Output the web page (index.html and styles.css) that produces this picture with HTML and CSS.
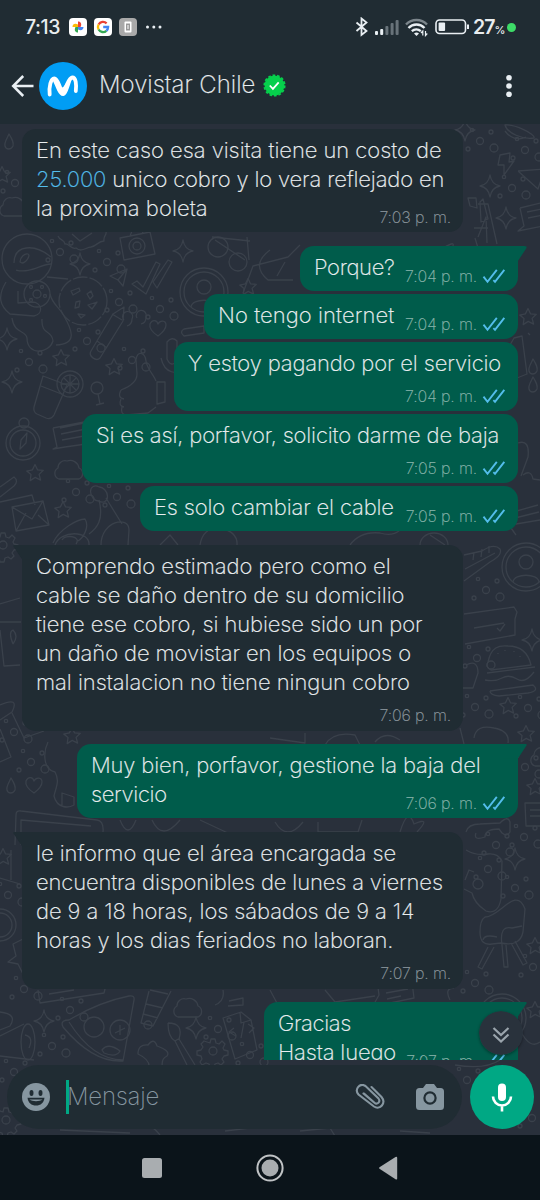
FILE: index.html
```html
<!DOCTYPE html>
<html lang="es">
<head>
<meta charset="utf-8">
<title>Movistar Chile</title>
<link rel="stylesheet" href="styles.css">
</head>
<body>
<svg class="defs" aria-hidden="true">
  <defs>
    <symbol id="ticks" viewBox="0 0 24 16"><path d="M1.500 8.600l4 5.200L14.800 1.800M11.400 12.200l1.600 1.600L22.300 1.800" fill="none" stroke="#53bdeb" stroke-width="1.900"/></symbol>
    <path id="star" d="M0-8.500l2.500 5.300 5.800.5-4.200 4.100 1.500 5.800-5.400-2.800-5 3.200.8-6L-8.300-1.900l5.700-1.200z"/>
    <path id="spark" d="M0-11Q1.500-1.500 10 0 1.500 1.500 0 11-1.500 1.500-10 0-1.500-1.500 0-11z"/>
    <path id="cloud" d="M-10 9a6 6 0 0 1-1-11 7 7 0 0 1 9-7 9 9 0 0 1 12 7 6 6 0 0 1 0 11z"/>
    <path id="heart" d="M0 8C-6 4-9 0-8-4c2-5 7-4 8 0 2-4 8-4 8 1C8 1 4 5 0 8z"/>
    <path id="drop" d="M0-8C3-3 5 0 4 4 2 8-3 8-4 4-5 0-2-3 0-8z"/>
    <g id="dots"><circle r="3.500"/><circle cx="-12" cy="8" r="2"/><circle cx="11" cy="-9" r="2"/><circle cx="14" cy="7" r="4"/><circle cx="-8" cy="-11" r="1.700"/></g>
    <g id="gear"><circle r="4"/><path d="M-3-8l1-4h4l1 4 3 1 3-3 3 3-2 4 1 2 4 1v4l-4 1-2 3 2 3-3 3-3-2-3 1-1 4h-4l-1-4-3-1-4 2-2-3 2-3-1-3-4-1v-4l4-1 2-3-2-3 3-3z"/></g>
    <g id="avatar"><circle r="24"/><circle r="20"/><circle cy="-5" r="7"/><path d="M-13 15c1-9 25-9 26 0"/></g>
    <g id="bubbleNote"><path d="M-18-12l34-6 3 24-24 5-10 7 1-7-7 1 5-9z"/><path d="M-10-5l22-4M-9 1l22-4M-8 7l14-3"/></g>
  </defs>
</svg>

<div class="phone">
  <header class="top">
    <div class="status">
      <span class="clock">7:13</span>
      <svg class="app" viewBox="0 0 18 18"><rect width="18" height="18" rx="4" fill="#fff"/><path d="M9 9V3.500C12 3.500 13 6 11.500 9z" fill="#ea4335"/><path d="M9 9h5.500c0 3-2.500 4-5.500 2.500z" fill="#4285f4"/><path d="M9 9v5.500C6 14.500 5 12 6.500 9z" fill="#34a853"/><path d="M9 9H3.500C3.500 6 6 5 9 6.500z" fill="#fbbc04"/></svg>
      <svg class="app" viewBox="0 0 18 18"><rect width="18" height="18" rx="4" fill="#fff"/><g fill="none" stroke-width="2.300"><path d="M12.600 5.300A5.100 5.100 0 0 0 4.600 6.500" stroke="#ea4335"/><path d="M4.600 6.500a5.100 5.100 0 0 0 0 5" stroke="#fbbc04"/><path d="M4.600 11.500a5.100 5.100 0 0 0 7.800 1.300" stroke="#34a853"/><path d="M12.400 12.800A5.100 5.100 0 0 0 14.100 9H9.200" stroke="#4285f4"/></g></svg>
      <svg class="app" viewBox="0 0 18 18"><rect width="18" height="18" rx="4" fill="#a9a9a9"/><rect x="5.500" y="3.500" width="7" height="11" rx="1" fill="#fff"/><rect x="7" y="5.500" width="4" height="7" fill="#999"/><path d="M9 7v4" stroke="#fff"/></svg>
      <svg class="more" viewBox="0 0 18 4" fill="#e9eff3"><circle cx="2.500" cy="2" r="1.500"/><circle cx="8.800" cy="2" r="1.500"/><circle cx="15" cy="2" r="1.500"/></svg>
      <svg class="sys" viewBox="0 0 117 20" fill="none" stroke="#e9eff3">
        <path d="M1.500 5.500l10 8.500-5 4V1.500l5 4-10 8.500" stroke-width="1.800"/>
        <g stroke="none" fill="#e9eff3"><rect x="20" y="14" width="3" height="4" rx="1"/><rect x="25.200" y="12" width="3" height="6" rx="1"/></g>
        <g stroke="none" fill="#68737a"><rect x="30.400" y="9" width="3" height="9" rx="1"/><rect x="35.600" y="6" width="3" height="12" rx="1"/><rect x="40.600" y="3" width="3" height="15" rx="1"/></g>
        <path d="M51 7.500a14.500 14.500 0 0 1 21 0" stroke="#7b858b" stroke-width="2.400"/>
        <path d="M53.500 11a11 11 0 0 1 16 0M56.800 14.200a7 7 0 0 1 9 0" stroke-width="2.400"/>
        <path d="M59 16.500l2.500 2.500 2.500-2.500a4 4 0 0 0-5 0z" fill="#e9eff3" stroke="none"/><path d="M67.800 18.500v-4.500l-1.800 2M70.500 14v4.500l1.800-2" stroke-width="1.200"/>
        <rect x="81" y="3" width="29.500" height="13.500" rx="3.500" stroke-width="1.600"/><rect x="83.600" y="5.500" width="6.500" height="8.500" rx="1" fill="#e9eff3" stroke="none"/><path d="M113 7.500v4.500" stroke-width="2"/>
      </svg>
      <span class="pct">27<small>%</small></span>
      <i class="live"></i>
    </div>
    <div class="bar">
      <svg class="back" viewBox="0 0 24 24" fill="none" stroke="#e9eff3" stroke-width="2.500"><path d="M22.500 12H2.500M12.200 2L2.200 12l10 10"/></svg>
      <svg class="logo" viewBox="0 0 48 48"><circle cx="24" cy="24" r="24" fill="#019df4"/><path d="M10.700 32.500C9.800 24.500 11.800 16.500 15.300 16.300c4.200-.1 5.200 12 8.500 12.200 3.500-.2 5-12.500 9.400-13 3.800-.2 4.300 6.500 3.600 13.500" fill="none" stroke="#fff" stroke-width="3.800" stroke-linecap="round"/><path d="M13.500 18c4-4 7 7 10 7.500C26.500 25 29.500 14 33.500 15.500c-2 4-4.500 17.800-9 18.500-5 .5-7-8-11-16z" fill="#fff"/></svg>
      <h1>Movistar Chile</h1>
      <svg class="verified" viewBox="-11 -11 22 22"><circle r="9.500" fill="#06cf4c"/><circle r="9.800" fill="none" stroke="#06cf4c" stroke-width="1.600" stroke-dasharray="2.600 1.800"/><path d="M-4.500 0l3 3.200L4-3" fill="none" stroke="#fff" stroke-width="1.700"/></svg>
      <svg class="kebab" viewBox="0 0 6 24" fill="#e9eff3"><circle cx="3" cy="3.800" r="2.800"/><circle cx="3" cy="12" r="2.800"/><circle cx="3" cy="20.300" r="2.800"/></svg>
    </div>
  </header>

  <main class="chat">
    <svg class="wallpaper" viewBox="0 124 540 1011">
      <circle cx="27" cy="259" r="25"/><path d="M14 263c0-18 20-20 37-6M16 270c14 4 25-6 35-6M20 262c0-5 5-9 8-8s-2 9-6 9zM47 277l21 2M6 282c-9 15-6 24 4 32l24 2c10-2 8-14-2-14l-14 1V291M12 318c2 16 14 12 15 20 0 18 22 16 26 3-1-12-12-5-11-22M50 294c2 10 10 14 14 22 8 14 14 28-8 29"/><circle cx="37" cy="294" r="13"/><circle cx="37" cy="294" r="4"/><circle cx="31" cy="287" r="1.500"/><circle cx="42" cy="287" r="1.500"/><circle cx="45" cy="296" r="1.500"/><circle cx="31" cy="300" r="1.500"/>
      <circle cx="83" cy="301" r="24" stroke-dasharray="15 2"/><path d="M71 291l8-3 1 3-7 4zM87 294l4-3 2 5-3 3zM76 302l4-1-1 6-4 1zM88 305l9-3-5 7zM78 314l7 1-4 3z"/>
      <path d="M58 236c2 5 6 3 7 8 4-1 6 6 11 4 6 5 10-1 15-1 6-1 7-6 13-6-1-5 3-6 2-9M72 234l8 7 12-8M120 238l30-6 5 22-31 6zM130 236l2-5 9-1 2 3"/><circle cx="137" cy="246" r="8"/><circle cx="137" cy="246" r="4"/>
      <path d="M110 276l17-7-4 17-5-6zM118 280l9-11M132 284l5-3 6 6 13-25 4 2-14 30zM153 282l15-22 4 2-15 26zM124 320a5 5 0 1 1 8-1c0 4-2 6-5 7M137 318a5 5 0 1 1 9-1c0 5-2 6-5 7M91 351l22-37 11-7-1 14-23 37c-4 4-12-2-9-7zM97 341l10 7M112 314l10 6"/>
      <path d="M212 237l38 4M247 237l2 23M215 240l30 20"/><circle cx="218" cy="247" r="10"/><circle cx="238" cy="262" r="9"/>
      <use href="#avatar" x="204" y="292"/><use href="#avatar" x="526" y="567"/>
      <path d="M43 376l24 9-13 30q-3 5-8 3l-9-4q-4-2-3-7zM41 386l23 9M121 390c8-3 16-8 16-16l-1-14c1-10 9-8 10 1 1 8 8 14 10 20M121 390q-4 8 3 9M121 399q-3 7 3 8M122 407q-2 7 4 8l22-2 8-6M157 382h8v20l-8 2z"/><circle cx="70" cy="384" r="13"/><circle cx="70" cy="384" r="9"/><path d="M61 384h18M70 375v18M64 378l12 12M76 378l-12 12"/><circle cx="97" cy="388" r="6"/><path d="M98 394l2 10M96 405l8-2M161 358c4 18 18 14 18 14M167 342q5-6 10-1v20q-6 7-10-2zM184 329l20-3v7l-20 3q-5-4 0-7z"/>
      <circle cx="23" cy="443" r="17"/><circle cx="23" cy="443" r="13"/><circle cx="24" cy="423" r="5"/><path d="M20 449l1-9 6-7-1 10zM53 428l52-10M53 428l4 19-4 2 12-2 28-4M60 428l24-5M61 434l25-5M62 440l22-4"/><use href="#cloud" x="69" y="470"/>
      <path d="M0 487l14-10q5 4 0 9L0 497M0 502l32-7 3 10M12 507l31-6 6 24-33 6zM12 507l20 12 11-18M16 531l10-18M38 515l11 10M99 487a8 6 60 1 0 0 14a8 6 60 1 0 0-14M99 500c5 20-2 28-10 34M106 498l16 26M53 543c6-14 25-24 32-24 5 8-2 19-7 22M55 545c5-15 35-15 34 0M62 540c3-6 20-4 14 4M101 545c0-24 28-30 28-15l-1 15"/><use href="#gear" x="3" y="545"/>
      <path d="M0 604l20-6M0 622h21M0 630l4 36 16-1M13 644q-5-12 0-14 6 6 0 14M0 705q20-9 12 7L0 720M0 729l11 28-11 5M12 713l12 25 20-7M48 742c-5 10-5 28 7 30 5 9 1 15-1 24 3 13 15 12 20 9v-8l-12-4v12M15 845l1-30q0-5 5-4l76 9q7 1 6 12M21 845v-25l70 6"/><use href="#drop" x="11" y="786"/><use href="#heart" x="34" y="785"/><circle cx="0" cy="925" r="16"/><circle cx="0" cy="925" r="12"/><path d="M0 878l20 6M11 850v30M23 939l-10 5 3 12-8 6 10 2 5 10"/>
      <path d="M505 125c2 8 18 15 29 13 2-4-20-14-29-13zM505 131c5 7 13 10 21 6M500 155l10-2-1 9 5-1-10 14 0-10h-6zM518 171l26-2M518 171l20 18 4-12M483 199l5 20-7 3-1-20zM442 249q15-10 10-1-6 10 26 0l-3-10M478 237l8-20 1 26M474 228h14M488 204h0M470 206l-2-8h8l1 10zM478 204h10l9 40M520 208l25-6M520 208l4 18-6 5 30-6M527 212l15-3M528 218l15-3"/>
      <path d="M530 335l-2-2M510 345l4-7 8-2 5 38-10 4"/><use href="#drop" x="533" y="367"/><use href="#drop" x="533" y="385"/>
      <path d="M518 443q12-4 10 14l-7 19M523 475q8-6 10 4l7 1M513 512l25-7M515 518l24-6M516 524l24-4M516 535l-5-7 2-20M464 555l18-4q12-8 18-2 3 6-10 13l-26 19M465 569l30-16M473 560l1-8M481 557l1-8M489 553l0-7"/>
      <path d="M464 614l50-7 3 5-2 7 0 16-50 9M474 628l30-5M497 628l3 3 5-7"/><path d="M488 662c3-15 11-17 20-16 12 0 20 6 23 19l-40 5q-6-3-3-8zM487 673l48-6M485 680q10 2 17-2t15 1 17-7M490 691l43-6q7 6-5 8l-29 3q-9-1-9-5M498 653v1M505 650v1M514 651v1M520 656v1"/><path d="M466 665q12-6 12 8l-5 15h-10"/>
      <path d="M474 738q2-14 20-10 16 3 14 15M460 728l4 16M525 803h16v23h-15zM530 810h10M530 816h10M466 832q2-8 14-8l20-1q8-8 10-1v10q-3 5-8 1l-3-4q-14 0-14 8-12 4-9-4M466 850q10 6 22 4 10-1 14 7l-1 38q-3 16-15 12-12-8-14-18l-8-4M474 872l-5-2-4 10M477 875"/><circle cx="478" cy="884" r="5"/>
      <path d="M485 917c15 0 31-32 40-8l-2 23q-3 15-22 11l-9 1q-12 2-12-12 0-12 5-15zM502 945q-3-20 10-17l10-2M488 947l-10 20 4 2 12-22M502 945l2 22h4l-2-22M511 943l12 22 4-2-12-22M483 940q1-6 14-3"/>
      <path d="M38 990l2 13 64-10 2-8M49 994l25-4M63 1027c-3-6 2-7 6-7q30-18 60-24 6-1 5 4l-11 61q-30 2-60-34zM69 1022q24 38 54 38"/><circle cx="94" cy="1027" r="10"/><circle cx="120" cy="1030" r="10"/><path d="M102 1050q6-8 18 1-4 7-16 2zM115 1033l10-5M120 1025v10"/>
      <path d="M149 991l-8 32 12 3 18-35M146 1004l17 4M143 1014l15 4"/><circle cx="148" cy="1025" r="4"/><use href="#cloud" x="188" y="1008"/><path d="M138 1054q0-10 10-9 6-8 9 1 14 5 10 10-7 3-4 14-9 8-14-1 2-9-11-15zM168 1023q16 0 11 16l16 26M168 1023q0 14 7 18l12 24M175 1041l5-3M223 1018l18-6 10 8 6 30-22 9zM240 1012l1 11 10-3M234 1028l-5 4 7 4M248 1024l6 4-5 5M244 1022l-3 16M0 1012q18 2 10 14l-10 4M0 1036l24-12M0 1056l34 4M215 1005q10-4 8-15M229 1001l14-3 0 7-15 1"/><ellipse cx="28" cy="1042" rx="7" ry="18"/><path d="M25 1035q9 2 4 13"/><use href="#gear" x="213" y="1051"/>
      <use href="#bubbleNote" x="395" y="992"/><use href="#avatar" x="502" y="1018"/><use href="#gear" x="6" y="1120"/><path d="M455 1065q30 5 45-5M520 1030q10 20 20 12M60 1130l70 3M130 1126q18-7 30 9M225 1131l35-4M300 1131l30-3 5 8M400 1131l30 2"/>
      <use href="#spark" x="183" y="251"/><use href="#spark" x="80" y="264" /><use href="#spark" x="7" y="339"/><use href="#spark" x="12" y="382"/><use href="#spark" x="490" y="186"/><use href="#spark" x="506" y="218"/><use href="#spark" x="532" y="640"/><use href="#spark" x="515" y="859"/><use href="#spark" x="44" y="1021"/><use href="#spark" x="196" y="1028"/><use href="#spark" x="465" y="130"/>
      <use href="#star" x="61" y="358"/><use href="#star" x="114" y="367"/><use href="#star" x="248" y="287"/><use href="#star" x="35" y="473"/><use href="#star" x="63" y="510"/><use href="#star" x="2" y="175"/><use href="#star" x="528" y="317"/><use href="#star" x="508" y="706"/><use href="#star" x="526" y="734"/><use href="#star" x="535" y="787"/><use href="#star" x="535" y="946"/><use href="#star" x="72" y="736"/><use href="#star" x="535" y="1010"/><use href="#star" x="3" y="857"/>
      <use href="#heart" x="158" y="328"/><use href="#cloud" x="14" y="207"/><use href="#cloud" x="545" y="757"/><use href="#drop" x="9" y="142"/>
      <use href="#dots" x="15" y="183"/><use href="#dots" x="60" y="252"/><use href="#dots" x="107" y="262"/><use href="#dots" x="119" y="302"/><use href="#dots" x="160" y="309"/><use href="#dots" x="87" y="341"/><use href="#dots" x="29" y="362"/><use href="#dots" x="132" y="360"/><use href="#dots" x="76" y="492"/><use href="#dots" x="117" y="497"/><use href="#dots" x="480" y="141"/><use href="#dots" x="512" y="188"/><use href="#dots" x="525" y="150"/><use href="#dots" x="486" y="590"/><use href="#dots" x="477" y="658"/><use href="#dots" x="475" y="707"/><use href="#dots" x="528" y="708"/><use href="#dots" x="31" y="762"/><use href="#dots" x="14" y="732"/><use href="#dots" x="525" y="767"/><use href="#dots" x="496" y="845"/><use href="#dots" x="488" y="869"/><use href="#dots" x="515" y="888"/><use href="#dots" x="475" y="983"/><use href="#dots" x="533" y="967"/><use href="#dots" x="524" y="837"/><use href="#dots" x="8" y="895"/><use href="#dots" x="24" y="989"/><use href="#dots" x="70" y="1010"/><use href="#dots" x="52" y="1046"/><use href="#dots" x="218" y="1029"/><use href="#dots" x="250" y="1055"/><use href="#dots" x="467" y="1080"/><use href="#dots" x="532" y="1118"/><use href="#dots" x="14" y="1072"/>
      <path d="M300 245l-12 12-35 9-10 27M270 250q-20 15-2 30h25M285 262l-8 14M200 545q3-18 20-17 18 4 17 17M160 545l10-10 8 10M350 545q10-14 30-12 12 4 20-3M430 535l15 10M420 545a14 12 0 0 1 28 0M270 738l35 5 0-10M325 745q8-14 30-10l5 10M375 742q10-12 25-2M120 820q8 20 16 0M152 820q10 22 28 0M200 820l30 14M275 822q12 20 28 0M318 822v10h40l4-12M400 832q8-26 14-8 18-8 3 8M150 990l18 4M270 990l8 15M325 990l10 12 40-6M450 1000q-6-12 4-12"/>
    </svg>

    <section class="log">
      <article class="msg in plain"><p><span class="wide">En este caso esa visita tiene un costo de</span><span class="snug"><a>25.000</a> unico cobro y lo vera reflejado en</span><span class="loose">la proxima boleta</span></p><time>7:03 p. m.</time></article>
      <article class="msg out turn short w218"><p><span class="tight">Porque?</span></p><time>7:04 p. m.<svg><use href="#ticks"/></svg></time></article>
      <article class="msg out short w314"><p><span class="loose">No tengo internet</span></p><time>7:04 p. m.<svg><use href="#ticks"/></svg></time></article>
      <article class="msg out w344"><p><span class="snug">Y estoy pagando por el servicio</span></p><time>7:04 p. m.<svg><use href="#ticks"/></svg></time></article>
      <article class="msg out w436"><p><span class="snug">Si es así, porfavor, solicito darme de baja</span></p><time>7:05 p. m.<svg><use href="#ticks"/></svg></time></article>
      <article class="msg out short w378"><p><span class="snug">Es solo cambiar el cable</span></p><time>7:05 p. m.<svg><use href="#ticks"/></svg></time></article>
      <article class="msg in turn"><p><span class="wide">Comprendo estimado pero como el</span><span class="wide">cable se daño dentro de su domicilio</span><span>tiene ese cobro, si hubiese sido un por</span><span>un daño de movistar en los equipos o</span><span class="wide">mal instalacion no tiene ningun cobro</span></p><time>7:06 p. m.</time></article>
      <article class="msg out turn over w441"><p><span class="snug">Muy bien, porfavor, gestione la baja del</span><span class="tight">servicio</span></p><time>7:06 p. m.<svg><use href="#ticks"/></svg></time></article>
      <article class="msg in turn"><p><span class="wide">le informo que el área encargada se</span><span class="snug">encuentra disponibles de lunes a viernes</span><span>de 9 a 18 horas, los sábados de 9 a 14</span><span class="snug">horas y los dias feriados no laboran.</span></p><time>7:07 p. m.</time></article>
      <article class="msg out turn over w254"><p><span class="tight">Gracias</span><span class="snug">Hasta luego</span></p><time>7:07 p. m.<svg><use href="#ticks"/></svg></time></article>
      <svg class="jump" viewBox="0 0 44 44" fill="none"><circle cx="22" cy="22" r="22" fill="#29323c"/><path d="M14.500 17l7.500 7 7.500-7M14.500 23.500l7.500 7 7.500-7" stroke="#9aa4ac" stroke-width="2.200"/></svg>
    </section>

    <footer class="compose">
      <div class="field">
        <svg class="smile" viewBox="0 0 28 28"><circle cx="14" cy="14" r="14" fill="#8696a0"/><g fill="#202c33"><ellipse cx="9.500" cy="10" rx="2" ry="2.900"/><ellipse cx="18.500" cy="10" rx="2" ry="2.900"/><path d="M5.500 14.700h17c-.5 5-4 7.800-8.500 7.800s-8-2.800-8.500-7.800z"/></g><path d="M7.500 16.500h13c-3 2.200-10 2.200-13 0z" fill="#8696a0"/></svg>
        <span class="hint">Mensaje</span>
        <svg class="clip" viewBox="0 0 30 27" fill="none" stroke="#8696a0" stroke-width="2.100" stroke-linecap="round"><path d="M16.500 3L26.500 13c5 6-1.500 13.500-7.500 9.500L3.500 10.500C-1 5 5-1.500 10.500 2L23.500 14.500c2.500 3.500-1.500 6.500-4 4.200L9 9.500M8.500 9.500L18.500 18"/></svg>
        <svg class="camera" viewBox="0 0 28 26"><path d="M10 0h8l3 4h3.500A3.500 3.500 0 0 1 28 7.500v15a3.500 3.500 0 0 1-3.500 3.500h-21A3.500 3.500 0 0 1 0 22.500v-15A3.500 3.500 0 0 1 3.500 4H7z" fill="#8696a0"/><circle cx="14" cy="14" r="5.600" fill="none" stroke="#202c33" stroke-width="2.200"/></svg>
      </div>
      <svg class="mic" viewBox="0 0 64 64"><circle cx="32" cy="32" r="32" fill="#00a884"/><rect x="28" y="18.500" width="8" height="17.500" rx="4" fill="#fff"/><path d="M23 31.500a9 9 0 0 0 18 0M32 40.500v6" fill="none" stroke="#fff" stroke-width="2.600"/></svg>
    </footer>
  </main>

  <nav class="nav">
    <svg viewBox="0 0 30 30"><rect x="5" y="5" width="20" height="20" rx="2.500" fill="#a9adb0"/></svg>
    <svg viewBox="0 0 30 30"><circle cx="15" cy="15" r="12.600" fill="none" stroke="#c0c3c5" stroke-width="2"/><circle cx="15" cy="15" r="8.500" fill="#a9adb0"/></svg>
    <svg viewBox="0 0 30 30"><path d="M6.500 14.200L22.500 4q1.700-.8 1.700 1v20.500q0 1.500-1.700.7L6.500 15.800q-1-.8 0-1.600z" fill="#a9adb0"/></svg>
  </nav>
</div>
</body>
</html>
```
FILE: styles.css
```css
* { box-sizing: border-box; }
body { margin: 0; background: #0b141a; font-family: Inter, Roboto, "Liberation Sans", sans-serif; font-weight: 200; color: #e9edef; }
svg { display: block; flex: none; }
.defs { display: none; }
.phone { width: 540px; height: 1200px; display: flex; flex-direction: column; overflow: hidden; }

/* Status bar and conversation header */
.top { height: 124px; background: #202c33; }
.status { height: 54px; display: flex; align-items: center; padding-left: 25px; }
.clock { width: 44px; font-size: 19.5px; font-weight: 500; letter-spacing: -.4px; }
.app { width: 18px; height: 18px; margin-right: 7px; }
.more { width: 18px; height: 4px; margin-left: 1px; }
.sys { width: 117px; height: 20px; margin-left: 192px; }
.pct { width: 34px; margin-left: 1px; font-size: 19.5px; font-weight: 600; letter-spacing: -1px; white-space: nowrap; }
.pct small { font-size: 11px; font-weight: 500; }
.live { width: 9px; height: 9px; border-radius: 50%; background: #3ddc68; }
.bar { display: flex; align-items: center; height: 63px; padding-left: 11px; }
.back { width: 24px; height: 24px; }
.logo { width: 48px; height: 48px; margin-left: 4px; }
.bar h1 { width: 158px; margin: -1px 0 0 12px; font-size: 24px; font-weight: 200; line-height: 30px; white-space: nowrap; -webkit-text-stroke: .2px; }
.verified { width: 23px; height: 23px; margin-left: 6px; }
.kebab { width: 6px; height: 24px; margin-left: 220px; }

/* Messages */
.chat { position: relative; height: 1011px; background: #29303b; }
.wallpaper { position: absolute; inset: 0; width: 540px; height: 1011px; fill: none; stroke: #3a414b; stroke-width: 1.3; stroke-linejoin: round; }
.log { position: relative; height: 936px; padding: 5px 22px 0; overflow: hidden; display: flex; flex-direction: column; }
.msg { position: relative; flex: none; display: flex; flex-direction: column; margin-bottom: 3.5px; padding: 7px 14px 0; border-radius: 14px; }
.msg p { margin: 0; font-size: 22px; line-height: 29px; letter-spacing: -.1px; -webkit-text-stroke: .2px; }
.msg p > span { display: block; white-space: nowrap; }
.msg .tight { letter-spacing: -.36px; }
.msg .snug { letter-spacing: -.15px; }
.msg .wide { letter-spacing: -.05px; }
.msg .loose { letter-spacing: .08px; }
.msg a { color: #53bdeb; }
.msg time { display: flex; align-items: flex-end; align-self: flex-end; font-size: 16px; line-height: 20px; letter-spacing: -.15px; color: #8c979e; white-space: nowrap; -webkit-text-stroke: .15px; }
.in { width: 441px; margin-bottom: 13px; background: #202c33; }
.in time { margin: 8px -2px 6px 0; }
.plain { height: 103px; margin-bottom: 14px; }
.plain time { margin-top: -16px; }
.out { align-self: flex-end; height: 68.5px; background: #005c4b; }
.out time { margin: 8px -2px 0 0; color: #86b3a9; }
.out time svg { width: 24px; height: 16px; margin: 0 0 2px 5px; }
.short { height: 44.5px; flex-direction: row; justify-content: space-between; }
.short + .in { margin-top: 10.5px; }
.short time { align-self: flex-start; margin-top: 12.5px; }
.over { height: 74px; margin-bottom: 14px; }
.over time { margin-top: -16px; }
.turn::before { content: ""; position: absolute; top: 0; width: 24px; height: 15px; }
.out.turn::before { right: -9px; background: #005c4b; clip-path: polygon(0 0, 88% 0, 98% 3%, 98% 14%, 62% 100%, 0 100%); }
.in.turn::before { left: -9px; background: #202c33; clip-path: polygon(100% 0, 12% 0, 2% 3%, 2% 14%, 38% 100%, 100% 100%); }
.w218 { width: 218px; }
.w254 { width: 254px; }
.w314 { width: 314px; }
.w344 { width: 344px; }
.w378 { width: 378px; }
.w436 { width: 436px; }
.w441 { width: 441px; }
.jump { position: absolute; right: 17px; bottom: 5px; width: 44px; height: 44px; border-radius: 50%; box-shadow: 0 1px 3px #0006; }

/* Composer */
.compose { position: relative; display: flex; justify-content: space-between; padding: 5px 6px 0 7px; }
.field { display: flex; align-items: center; width: 455px; height: 64px; padding-left: 15px; border-radius: 32px; background: #202c33; }
.smile { width: 28px; height: 28px; }
.hint { height: 34px; width: 284px; margin-left: 16px; border-left: 3px solid #00a884; font-size: 24px; line-height: 34px; letter-spacing: -.24px; text-indent: -2px; color: #8696a0; }
.clip { width: 30px; height: 27px; margin-left: 5px; }
.camera { width: 28px; height: 26px; margin-left: 31px; }
.mic { width: 64px; height: 64px; }

/* System navigation */
.nav { height: 65px; display: flex; align-items: center; padding-left: 137px; gap: 88px; background: #0b141a; }
.nav svg { width: 30px; height: 30px; }
```
